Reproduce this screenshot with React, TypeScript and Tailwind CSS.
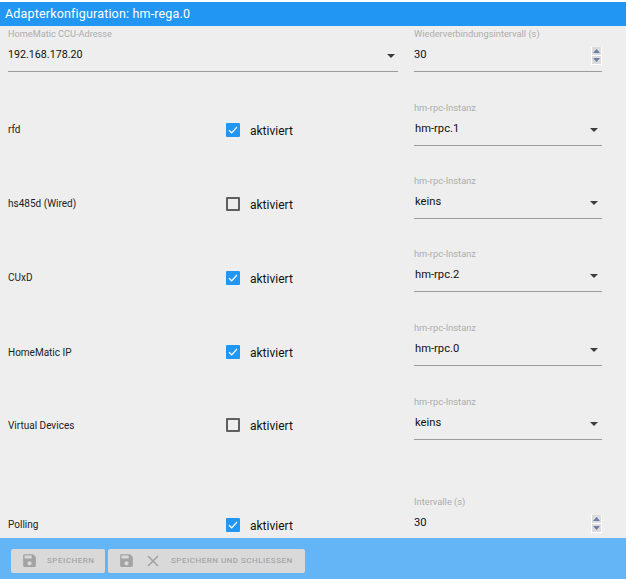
import React from "react";

function Arrow() {
  return (
    <svg width="8" height="4" viewBox="0 0 8 4" className="shrink-0">
      <path d="M0 0H8L4 4Z" fill="#3c3c3c" />
    </svg>
  );
}

function Spinner() {
  return (
    <div className="w-[11px] h-[18px] bg-white flex flex-col items-center justify-center gap-px">
      <div className="w-[9px] h-[8px] bg-[#dcdcdc] flex items-center justify-center">
        <svg width="7" height="4" viewBox="0 0 7 4"><path d="M0 4L3.5 0L7 4Z" fill="#6b7fa8" /></svg>
      </div>
      <div className="w-[9px] h-[8px] bg-[#dcdcdc] flex items-center justify-center">
        <svg width="7" height="4" viewBox="0 0 7 4"><path d="M0 0H7L3.5 4Z" fill="#6b7fa8" /></svg>
      </div>
    </div>
  );
}

function Field({ label, value, kind, className }: { label: string; value: string; kind: "select" | "number"; className: string }) {
  return (
    <div className={className}>
      <div className="text-[9.3px] leading-[12px] text-[#adadad] whitespace-nowrap">{label}</div>
      <div className={kind === "select" ? "h-[31px] border-b border-[#9b9b9b] flex items-center justify-between box-content pr-[4px] pl-[1px]" : "h-[31px] border-b border-[#9b9b9b] flex items-center justify-between box-content"}>
        <span className="text-[11.2px] text-[#111] leading-none mb-[1px]">{value}</span>
        {kind === "select" ? <Arrow /> : <Spinner />}
      </div>
    </div>
  );
}

function Check({ on }: { on: boolean }) {
  return (
    <div className="flex items-center w-[188px] shrink-0">
      {on ? (
        <div className="w-[14px] h-[14px] rounded-[1px] bg-[#2196f3] flex items-center justify-center">
          <svg width="10" height="8" viewBox="0 0 10 8" fill="none"><path d="M1 4.2L3.7 6.8L9 1" stroke="#fff" strokeWidth="1.2" /></svg>
        </div>
      ) : (
        <div className="w-[14px] h-[14px] rounded-[1px] border-2 border-[#5f5f5f]" />
      )}
      <span className="ml-[10px] mt-[4px] text-[12px] text-[#111] leading-[13px]">aktiviert</span>
    </div>
  );
}

function Row({ name, on, value, h, labelClass, checkClass }: { name: string; on: boolean; value: string; h: string; labelClass: string; checkClass: string }) {
  return (
    <div className={`flex items-end ${h}`}>
      <div className={`flex items-center w-[218px] shrink-0 text-[10px] text-[#222] pb-[1px] ${labelClass}`}>{name}</div>
      <div className={`flex items-center ${checkClass}`}><Check on={on} /></div>
      <Field className="w-[188px] shrink-0" label="hm-rpc-Instanz" value={value} kind="select" />
    </div>
  );
}

function Save() {
  return (
    <svg width="17" height="17" viewBox="0 0 24 24" className="shrink-0">
      <path d="M17 3H5a2 2 0 0 0-2 2v14a2 2 0 0 0 2 2h14a2 2 0 0 0 2-2V7l-4-4zm-5 16a3 3 0 1 1 0-6 3 3 0 0 1 0 6zm3-10H5V5h10v4z" fill="#a3a3a3" />
    </svg>
  );
}

export default function App() {
  return (
    <div className="w-[626px] h-[579px] flex flex-col bg-[#eeeeee] overflow-hidden font-['Roboto',sans-serif]">
      <div className="h-[2px] bg-white shrink-0" />
      <div className="h-[24px] shrink-0 bg-[#2196f3] text-white text-[12.5px] tracking-[0.17px] flex items-center pl-[5px]">Adapterkonfiguration: hm-rega.0</div>
      <div className="flex-1 min-h-0 overflow-hidden pl-[8px]">
        <div className="flex h-[46px] items-start pt-[2px]">
          <div className="w-[390px] shrink-0">
            <div className="text-[9.2px] leading-[12px] text-[#adadad]">HomeMatic CCU-Adresse</div>
            <div className="h-[32px] border-b border-[#9b9b9b] flex items-center justify-between pr-[3px]">
              <span className="text-[10.7px] text-[#111]">192.168.178.20</span>
              <Arrow />
            </div>
          </div>
          <Field className="w-[188px] ml-[16px] shrink-0" label="Wiederverbindungsintervall (s)" value="30" kind="number" />
        </div>
        <Row name="rfd" on value="hm-rpc.1" h="h-[74px]" labelClass="mb-[8px]" checkClass="mb-[8px]" />
        <Row name="hs485d (Wired)" on={false} value="keins" h="h-[73px]" labelClass="mb-[7px]" checkClass="mb-[7px]" />
        <Row name="CUxD" on value="hm-rpc.2" h="h-[73px]" labelClass="mb-[6px]" checkClass="mb-[6px]" />
        <Row name="HomeMatic IP" on value="hm-rpc.0" h="h-[74px]" labelClass="mb-[5px]" checkClass="mb-[6px]" />
        <Row name="Virtual Devices" on={false} value="keins" h="h-[74px]" labelClass="mb-[6px]" checkClass="mb-[7px]" />
        <div className="flex items-start h-[99px] pt-[56px]">
          <div className="w-[218px] shrink-0 text-[10px] text-[#222] pt-[21px]">Polling</div>
          <div className="pt-[20px]"><Check on /></div>
          <Field className="w-[188px] shrink-0" label="Intervalle (s)" value="30" kind="number" />
        </div>
      </div>
      <div className="h-[41px] shrink-0 bg-[#64b5f6] flex items-center gap-[3px] pl-[11px] pt-[4px]">
        <div className="h-[24px] w-[94px] bg-[#d9d9d9] rounded-[2px] flex items-center pl-[10px] gap-[9px]">
          <Save />
          <span className="text-[8.1px] font-medium tracking-[0.45px] text-[#a6a6a6]">SPEICHERN</span>
        </div>
        <div className="h-[24px] w-[197px] bg-[#d9d9d9] rounded-[2px] flex items-center pl-[10px]">
          <Save />
          <svg width="14" height="14" viewBox="0 0 14 14" className="ml-[11px] shrink-0"><path d="M2 2L12 12M12 2L2 12" stroke="#a3a3a3" strokeWidth="1.6" /></svg>
          <span className="ml-[11px] text-[8.1px] font-medium tracking-[0.45px] text-[#a6a6a6] whitespace-nowrap">SPEICHERN UND SCHLIESSEN</span>
        </div>
      </div>
    </div>
  );
}
